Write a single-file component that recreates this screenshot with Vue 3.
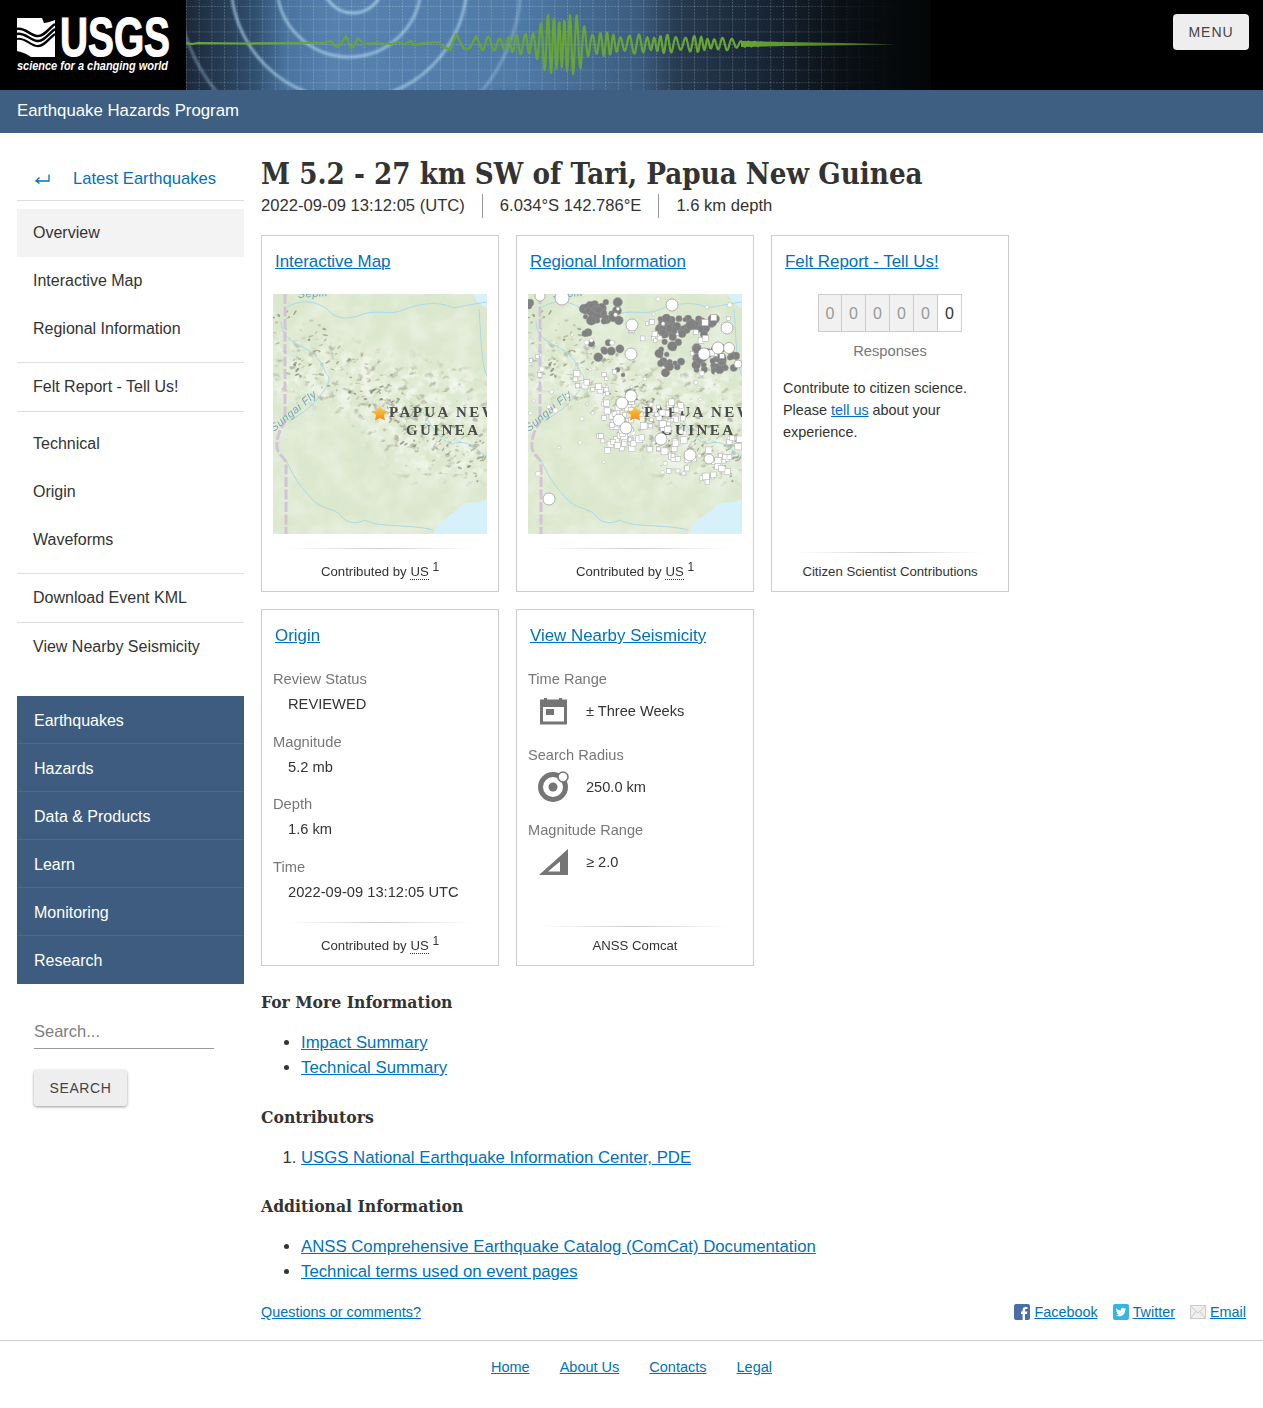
<script setup>
function rng(seed) {
  let s = seed
  return () => {
    s = (s * 1664525 + 1013904223) % 4294967296
    return s / 4294967296
  }
}

function lerpTable(table, x) {
  for (let i = 0; i < table.length - 1; i++) {
    const [x0, y0] = table[i]
    const [x1, y1] = table[i + 1]
    if (x >= x0 && x <= x1) return y0 + ((y1 - y0) * (x - x0)) / (x1 - x0)
  }
  return 0
}

// seismogram line: hand-placed start, then an irregular oscillation
function seismo() {
  const start = [[0,43],[6,44],[12,43],[60,43.5],[120,43],[138,43],[145,41],[150,47],[154,45],[160,36],[165,48],[168,46],[172,38],[178,44],[190,43],[205,44],[212,42],[218,44],[225,41],[228,45],[240,43],[252,42],[258,47],[264,50],[270,34],[278,49],[284,48],[290,36],[296,50]]
  const env = [[296,7],[330,9],[345,15],[362,30],[379,38],[392,28],[405,15],[420,12],[440,10],[500,9],[545,6],[570,2],[590,.6],[600,0]]
  const pts = start.map((p) => p.join(','))
  let phase = Math.PI / 2
  for (let x = 297; x <= 600; x += 0.75) {
    const base = x < 340 ? 10 : x < 405 ? 6.5 : 8
    const period = base * (1 + 0.22 * Math.sin(x * 0.13))
    phase += (2 * Math.PI * 0.75) / period
    const mod = 0.82 + 0.18 * Math.sin(x * 0.21 + 1.2)
    const y = 44 + lerpTable(env, x) * mod * Math.sin(phase)
    pts.push(x.toFixed(1) + ',' + y.toFixed(1))
  }
  return pts.join(' ')
}
const seismoPts = seismo()

function hills() {
  const r = rng(21)
  const out = []
  for (let i = 0; i < 190; i++) {
    const x = r() * 214
    const c = 42 + x * 0.5
    const y = c + (r() - 0.5) * (x < 60 ? 70 : 52) + (x > 120 ? 18 : 0)
    const rot = -60 + r() * 80
    out.push({ x, y, rx: 0.8 + r() * 2.2, ry: 0.5 + r() * 0.9, rot, o: 0.2 + r() * 0.45 })
  }
  return out
}
const hillList = hills()

const bigCircles = [[34,4,7],[144,11,6],[104,31,6],[199,34,6],[103,60,6],[176,60,6],[190,54,6],[201,54,5.5],[103,102,6],[94,109,6],[91,126,6],[98,134,6],[133,145,6],[162,161,6],[181,165,5],[21,205,6],[210,70,4],[12,2,5]]
function regional() {
  const r = rng(99)
  const gray = []
  const boxes = [[55,8,36,20,42],[131,24,57,17,56],[131,41,24,40,18],[168,54,40,24,38],[55,35,10,6,3],[60,45,35,25,7],[0,6,4,6,2],[85,74,20,12,2]]
  for (const [x, y, w, h, n] of boxes) {
    for (let i = 0; i < n; i++) gray.push({ x: x + r() * w, y: y + r() * h, s: 2 + r() * 2.8 })
  }
  const squares = []
  const sq = [[68,104,87,50,90],[41,74,44,30,14],[138,158,63,17,18],[100,22,45,24,8],[162,18,44,44,10],[0,60,10,22,3],[170,178,14,12,5],[150,135,60,20,6]]
  for (const [x, y, w, h, n] of sq) {
    for (let i = 0; i < n; i++) squares.push({ x: x + r() * w, y: y + r() * h, s: 3.5 + r() * 3.5 })
  }
  const small = []
  for (let i = 0; i < 60; i++) small.push({ x: r() * 214, y: r() * 180, s: 1 + r() * 1.6 })
  return { gray, squares, small }
}
const reg = regional()

const sideA = ['Overview', 'Interactive Map', 'Regional Information']
const sideC = ['Technical', 'Origin', 'Waveforms']
const blueNav = ['Earthquakes', 'Hazards', 'Data & Products', 'Learn', 'Monitoring', 'Research']
const mapCards = [
  { title: 'Interactive Map', overlay: false },
  { title: 'Regional Information', overlay: true }
]
const origin = [
  ['Review Status', 'REVIEWED'],
  ['Magnitude', '5.2 mb'],
  ['Depth', '1.6 km'],
  ['Time', '2022-09-09 13:12:05 UTC']
]
</script>

<template>
  <div class="page">
    <header class="top">
      <div class="logo">
        <svg width="186" height="90" viewBox="0 0 186 90">
          <rect x="17" y="18" width="38" height="39" fill="#fff" />
          <path d="M42 18 H55 V20 C50 22 46 23 44 23 Z" fill="#000" />
          <path d="M17 51 C22 52 27 54 31 57 H17 Z" fill="#000" />
          <g fill="none" stroke="#000">
            <path d="M17 29 C24 27 30 35 37 36 C44 37 49 28 55 24" stroke-width="2.6" />
            <path d="M17 34 C24 32 30 40 37 41 C44 42 49 33 55 29" stroke-width="2.4" />
            <path d="M17 39 C24 37 30 45 37 46 C44 47 49 38 55 34" stroke-width="2.2" />
          </g>
          <text x="60" y="56" class="logo-big" textLength="110" lengthAdjust="spacingAndGlyphs">USGS</text>
          <text x="17" y="70" class="logo-small" textLength="151" lengthAdjust="spacingAndGlyphs">science for a changing world</text>
        </svg>
      </div>
      <div class="banner">
        <svg width="745" height="90" viewBox="0 0 745 90">
          <defs>
            <linearGradient id="bg" x1="0" x2="1" y1="0" y2="0">
              <stop offset="0" stop-color="#1b2838" />
              <stop offset="0.09" stop-color="#2f4d6c" />
              <stop offset="0.135" stop-color="#4a74a0" />
              <stop offset="0.2" stop-color="#5782b0" />
              <stop offset="0.45" stop-color="#4f7aa6" />
              <stop offset="0.61" stop-color="#3a5b7d" />
              <stop offset="0.66" stop-color="#263a50" />
              <stop offset="0.77" stop-color="#182636" />
              <stop offset="0.88" stop-color="#0a1015" />
              <stop offset="1" stop-color="#030506" />
            </linearGradient>
            <pattern id="grid" width="12.7" height="12.7" patternUnits="userSpaceOnUse" y="6">
              <path d="M0 .5H12.7M.5 0V12.7" stroke="#fff" stroke-opacity=".25" stroke-dasharray="1.5 1.5" fill="none" />
            </pattern>
            <filter id="glow" x="-20%" y="-20%" width="140%" height="140%"><feGaussianBlur stdDeviation="1.3" /></filter>
            <linearGradient id="gridFade" x1="0" x2="1" y1="0" y2="0">
              <stop offset="0" stop-color="#fff" />
              <stop offset="0.82" stop-color="#fff" />
              <stop offset="0.9" stop-color="#333" />
              <stop offset="1" stop-color="#000" />
            </linearGradient>
            <mask id="gmask"><rect width="745" height="90" fill="url(#gridFade)" /></mask>
            <linearGradient id="tail" x1="0" x2="1" y1="0" y2="0">
              <stop offset="0" stop-color="#69a534" />
              <stop offset="0.7" stop-color="#4f7d2a" />
              <stop offset="1" stop-color="#2a4017" />
            </linearGradient>
          </defs>
          <rect width="745" height="90" fill="url(#bg)" />
          <g fill="none" stroke="#a9cfe8" filter="url(#glow)">
            <circle cx="167" cy="-17" r="30" stroke-width="3" stroke-opacity=".8" />
            <circle cx="163" cy="-15" r="72" stroke-width="3" stroke-opacity=".7" />
            <circle cx="163" cy="-18" r="118" stroke-width="3" stroke-opacity=".7" />
            <circle cx="163" cy="-18" r="172" stroke-width="3" stroke-opacity=".4" />
          </g>
          <rect width="745" height="90" fill="url(#grid)" mask="url(#gmask)" />
          <polyline :points="seismoPts" fill="none" stroke="#69a534" stroke-width="2.2" stroke-linejoin="round" />
          <path d="M555 41 L600 42 L680 43.5 L712 44.500 L680 45 L600 46 L555 47 Z" fill="url(#tail)" />
        </svg>
      </div>
      <button class="menu">MENU</button>
    </header>
    <div class="program">Earthquake Hazards Program</div>

    <div class="body-wrap">
      <aside class="side">
        <a class="latest">
          <span class="arrow">
            <svg width="15" height="10" viewBox="0 0 15 10"><path d="M14 0.500 V7 H1.500 M4.500 3.500 L1 7 L4.500 9.500" fill="none" stroke="#0071bc" stroke-width="1.300" /></svg>
          </span>
          <span>Latest Earthquakes</span>
        </a>
        <nav class="side-nav nine">
          <a v-for="(s, i) in sideA" :key="s" class="item" :class="{ on: i === 0 }">{{ s }}</a>
        </nav>
        <nav class="side-nav"><a class="item">Felt Report - Tell Us!</a></nav>
        <nav class="side-nav nine"><a v-for="s in sideC" :key="s" class="item">{{ s }}</a></nav>
        <nav class="side-nav"><a class="item">Download Event KML</a></nav>
        <nav class="side-nav last"><a class="item">View Nearby Seismicity</a></nav>
        <nav class="blue">
          <a v-for="b in blueNav" :key="b" class="blue-item">{{ b }}</a>
        </nav>
        <div class="search">
          <div class="search-input">Search...</div>
          <button class="search-btn">SEARCH</button>
        </div>
      </aside>

      <main class="main">
        <h1 class="title">M 5.2 - 27 km SW of Tari, Papua New Guinea</h1>
        <div class="meta">
          <span>2022-09-09 13:12:05 (UTC)</span>
          <span>6.034°S 142.786°E</span>
          <span>1.6 km depth</span>
        </div>

        <div class="cards">
          <section v-for="c in mapCards" :key="c.title" class="card">
            <a class="card-title">{{ c.title }}</a>
            <svg class="map" width="214" height="240" viewBox="0 0 214 240">
              <defs>
                <filter :id="'tex' + c.overlay" x="0" y="0" width="100%" height="100%">
                  <feTurbulence type="fractalNoise" baseFrequency=".04" numOctaves="3" seed="4" />
                  <feColorMatrix values="0 0 0 0 1  0 0 0 0 1  0 0 0 0 1  0 0 0 1.8 -.7" />
                </filter>
                <filter :id="'hn' + c.overlay" x="0" y="0" width="100%" height="100%">
                  <feTurbulence type="fractalNoise" baseFrequency=".11 .14" numOctaves="3" seed="11" />
                  <feColorMatrix values="0 0 0 0 .42  0 0 0 0 .43  0 0 0 0 .33  0 0 0 5 -3" />
                  <feGaussianBlur stdDeviation=".4" />
                </filter>
                <filter :id="'wn' + c.overlay" x="0" y="0" width="100%" height="100%">
                  <feTurbulence type="fractalNoise" baseFrequency=".09" numOctaves="3" seed="31" />
                  <feColorMatrix values="0 0 0 0 1  0 0 0 0 1  0 0 0 0 1  0 0 0 4 -1.7" />
                </filter>
                <filter :id="'bf' + c.overlay"><feGaussianBlur stdDeviation="7" /></filter>
                <mask :id="'band' + c.overlay">
                  <polygon points="0,45 70,50 214,80 214,185 130,185 80,125 0,95" fill="#fff" :filter="`url(#bf${c.overlay})`" />
                </mask>
                <filter :id="'blur' + c.overlay"><feGaussianBlur stdDeviation=".5" /></filter>
                <linearGradient :id="'star' + c.overlay" x1="0" x2="0" y1="0" y2="1">
                  <stop offset="0" stop-color="#ffd04a" />
                  <stop offset="1" stop-color="#f58a0b" />
                </linearGradient>
              </defs>
              <rect width="214" height="240" fill="#dce8ce" />
              <rect width="214" height="240" :filter="`url(#tex${c.overlay})`" opacity=".4" />
              <g :mask="`url(#band${c.overlay})`">
                <rect width="214" height="240" :filter="`url(#wn${c.overlay})`" opacity=".45" />
                <rect width="214" height="240" :filter="`url(#hn${c.overlay})`" opacity=".85" />
              </g>
              <path d="M160 240 C168 225 176 222 185 215 C192 205 200 212 214 205 V240 Z" fill="#d7f1fb" />
              <path d="M200 0 C203 8 208 12 214 14 V0 Z" fill="#d7f1fb" />
              <g :filter="`url(#blur${c.overlay})`">
                <ellipse v-for="(h, i) in hillList" :key="i" :cx="h.x" :cy="h.y" :rx="h.rx" :ry="h.ry" :transform="`rotate(${h.rot} ${h.x} ${h.y})`" fill="#6e7358" :opacity="h.o" />
              </g>
              <g fill="none" stroke="#a9d9e6" stroke-width="1">
                <path d="M14 13 C30 4 45 8 55 16 C62 24 72 26 85 22 C100 14 118 22 130 16 C145 10 165 6 180 14 C190 12 200 10 214 8" />
                <path d="M8 27 C8 40 16 46 28 52 C40 58 50 68 52 78 C60 84 54 92 50 98 C40 114 26 120 16 128" />
                <path d="M14 168 C22 186 30 196 42 208 C52 216 62 214 68 222 C74 230 84 230 92 226 C104 234 140 230 160 236" />
                <path d="M150 118 C158 132 166 145 178 150 C190 146 200 150 206 158 L214 162" />
                <path d="M206 15 C208 40 208 70 214 82" />
              </g>
              <path d="M12 0 V128 C8 134 3 142 4 154 C6 162 12 164 13 168 V240" fill="none" stroke="#d2c4d8" stroke-width="3" stroke-dasharray="10 2.500" />
              <text x="25" y="4" class="river" transform="rotate(-4 25 4)">Sepik</text>
              <text x="1" y="138" class="river" transform="rotate(-40 1 138)">Sungai Fly</text>
              <text x="116" y="123" class="place">PAPUA NEW</text>
              <text x="133" y="141" class="place">GUINEA</text>
              <g v-if="c.overlay">
                <circle v-for="(g, i) in reg.gray" :key="'g' + i" :cx="g.x" :cy="g.y" :r="g.s" fill="#808080" stroke="#999" stroke-width=".4" />
                <circle v-for="(g, i) in reg.small" :key="'s' + i" :cx="g.x" :cy="g.y" :r="g.s" fill="#fff" stroke="#aaa" stroke-width=".4" />
                <rect v-for="(g, i) in reg.squares" :key="'q' + i" :x="g.x" :y="g.y" :width="g.s" :height="g.s" fill="#fff" stroke="#aaa" stroke-width=".5" />
                <circle v-for="(g, i) in bigCircles" :key="'b' + i" :cx="g[0]" :cy="g[1]" :r="g[2]" fill="#fff" stroke="#888" stroke-width=".6" />
              </g>
              <path d="M107 111.500 L109.400 116.600 L115 117.300 L110.900 121.100 L112 126.600 L107 123.900 L102 126.600 L103.100 121.100 L99 117.300 L104.600 116.600 Z" :fill="`url(#star${c.overlay})`" />
            </svg>
            <footer class="card-foot">Contributed by <abbr>US</abbr> <sup>1</sup></footer>
          </section>

          <section class="card">
            <a class="card-title">Felt Report - Tell Us!</a>
            <div class="counter">
              <span v-for="n in 5" :key="n" class="digit">0</span><span class="digit now">0</span>
            </div>
            <div class="responses">Responses</div>
            <p class="cta">Contribute to citizen science. Please <a>tell us</a> about your experience.</p>
            <footer class="card-foot felt">Citizen Scientist Contributions</footer>
          </section>

          <section class="card">
            <a class="card-title">Origin</a>
            <dl class="origin">
              <template v-for="o in origin" :key="o[0]">
                <dt>{{ o[0] }}</dt>
                <dd>{{ o[1] }}</dd>
              </template>
            </dl>
            <footer class="card-foot">Contributed by <abbr>US</abbr> <sup>1</sup></footer>
          </section>

          <section class="card">
            <a class="card-title">View Nearby Seismicity</a>
            <div class="near">
              <div class="near-label">Time Range</div>
              <div class="near-row">
                <svg width="40" height="30" viewBox="0 0 40 30">
                  <path d="M4 3.500 H8 V2 H11 V3.500 H23 V2 H26 V3.500 H31 V28.500 H4 Z M7 11 V25.500 H28 V11 Z" fill="#757575" fill-rule="evenodd" />
                  <rect x="10" y="13" width="8" height="6" fill="#757575" />
                </svg>
                <span>± Three Weeks</span>
              </div>
              <div class="near-label b">Search Radius</div>
              <div class="near-row">
                <svg width="40" height="32" viewBox="0 0 40 32">
                  <circle cx="17" cy="16" r="12.500" fill="none" stroke="#757575" stroke-width="5" />
                  <circle cx="17" cy="16" r="4.500" fill="#757575" />
                  <circle cx="27" cy="6" r="5" fill="#fff" stroke="#757575" stroke-width="1.600" />
                </svg>
                <span>250.0 km</span>
              </div>
              <div class="near-label c">Magnitude Range</div>
              <div class="near-row">
                <svg width="40" height="28" viewBox="0 0 40 28">
                  <path d="M3 27 L32 1 V27 Z M12 23.500 H24 V13.500 Z" fill="#757575" fill-rule="evenodd" />
                </svg>
                <span>≥ 2.0</span>
              </div>
            </div>
            <footer class="card-foot felt2">ANSS Comcat</footer>
          </section>
        </div>

        <h2 class="h2 h2a">For More Information</h2>
        <ul class="list">
          <li><a>Impact Summary</a></li>
          <li><a>Technical Summary</a></li>
        </ul>
        <h2 class="h2">Contributors</h2>
        <ol class="list">
          <li><a>USGS National Earthquake Information Center, PDE</a></li>
        </ol>
        <h2 class="h2 h2a">Additional Information</h2>
        <ul class="list">
          <li><a>ANSS Comprehensive Earthquake Catalog (ComCat) Documentation</a></li>
          <li><a>Technical terms used on event pages</a></li>
        </ul>

        <div class="social-row">
          <a class="q">Questions or comments?</a>
          <div class="social">
            <span class="soc">
              <svg width="16" height="16" viewBox="0 0 16 16"><rect width="16" height="16" rx="2" fill="#4a6ea9" /><path d="M11 16V10h2l.3-2.400H11V6.200c0-.7.2-1.100 1.200-1.100h1.200V3c-.6-.1-1.200-.1-1.800-.1-1.800 0-3 1.100-3 3v1.700H7V10h1.600v6Z" fill="#fff" /></svg>
              <a>Facebook</a>
            </span>
            <span class="soc">
              <svg width="16" height="16" viewBox="0 0 16 16"><rect width="16" height="16" rx="2" fill="#35b5e5" /><path d="M13 5c-.4.2-.8.3-1.200.3.4-.3.8-.7.9-1.200-.4.2-.9.4-1.300.5a2.100 2.100 0 0 0-3.600 1.900C6 6.400 4.500 5.600 3.500 4.300c-.6 1-.3 2.200.6 2.800-.3 0-.6-.1-.9-.3 0 1 .7 1.900 1.700 2.100-.3.1-.6.1-1 0 .3.900 1.100 1.500 2 1.500-.9.700-2 1-3.100.9 1 .6 2.100 1 3.300 1 4 0 6.300-3.400 6.100-6.400.4-.3.8-.6 1.100-1Z" fill="#fff" /></svg>
              <a>Twitter</a>
            </span>
            <span class="soc">
              <svg width="16" height="16" viewBox="0 0 16 16"><rect x=".5" y="1.500" width="15" height="13" fill="#efefef" stroke="#ccc" /><path d="M1 2.500 8 9l7-6.500M1 14l5-6.500M15 14l-5-6.500" fill="none" stroke="#ccc" /></svg>
              <a>Email</a>
            </span>
          </div>
        </div>
      </main>
    </div>

    <footer class="foot">
      <a>Home</a><a>About Us</a><a>Contacts</a><a>Legal</a>
    </footer>
  </div>
</template>

<style>
html, body { margin: 0; background: #fff; }
</style>

<style scoped>
.page { font-family: "Liberation Sans", Arial, sans-serif; font-size: 16px; color: #333; min-height: 1408px; }
a { color: #0071bc; }

.top { height: 90px; background: #000; display: flex; position: relative; }
.logo { width: 186px; height: 90px; }
.logo svg, .banner svg { display: block; }
.logo-big { font: 700 56px "Liberation Sans", sans-serif; fill: #fff; stroke: #fff; stroke-width: 1.2px; }
.logo-small { font: italic 700 12px "Liberation Sans", sans-serif; fill: #fff; }
.banner { width: 745px; height: 90px; }
.menu { position: absolute; right: 14px; top: 14px; width: 76px; height: 36px; border: 0; border-radius: 4px; background: #eee; color: #444; font: 14px "Liberation Sans", sans-serif; letter-spacing: 1px; padding: 0; }

.program { height: 43px; background: #3e5f82; color: #fff; font-size: 16.8px; line-height: 41px; padding-left: 17px; }

.body-wrap { display: flex; padding: 0 17px; gap: 17px; }
.side { width: 227px; flex: none; padding-top: 22px; }
.latest { display: flex; align-items: center; height: 46px; border-bottom: 1px solid #ddd; box-sizing: border-box; font-size: 16.6px; padding: 2px 0 0 18px; }
.arrow { width: 38px; display: flex; }
.side-nav { border-bottom: 1px solid #ddd; padding: 8px 0; display: flex; flex-direction: column; }
.side-nav.nine { padding-bottom: 9px; }
.side-nav.last { border-bottom: 0; }
.item { height: 48px; line-height: 48px; padding-left: 16px; color: #333; }
.side-nav .item:only-child { height: 32px; line-height: 32px; }
.item.on { background: #f3f3f3; }
.blue { margin-top: 25px; display: flex; flex-direction: column; }
.blue-item { height: 48px; line-height: 50px; box-sizing: border-box; background: #3d5c7f; color: #fff; padding-left: 17px; border-bottom: 1px solid #4a6a8d; }
.blue-item:last-child { border-bottom: 0; }
.search { padding: 32px 30px 0 17px; }
.search-input { height: 33px; line-height: 31px; box-sizing: border-box; border-bottom: 1px solid #999; color: #808080; font-size: 16.5px; }
.search-btn { display: block; margin-top: 21px; width: 93px; height: 36px; border: 0; border-radius: 3px; background: #eee; color: #444; font: 14px "Liberation Sans", sans-serif; letter-spacing: .6px; box-shadow: 0 1px 3px rgba(0, 0, 0, .4); padding: 0; }

.main { flex: 1; min-width: 0; padding-top: 22px; }
.title { margin: 0; font: 700 29.2px/38px "DejaVu Serif Condensed", "DejaVu Serif", serif; color: #333; }
.meta { display: flex; height: 24px; line-height: 24px; margin-top: 1px; font-size: 16.6px; }
.meta span { padding-right: 17px; margin-right: 17px; border-right: 1px solid #999; }
.meta span:last-child { border: 0; }

.cards { display: grid; grid-template-columns: repeat(3, 238px); grid-auto-rows: 357px; gap: 17px; margin-top: 17px; }
.card { position: relative; border: 1px solid #ccc; box-sizing: border-box; padding: 0 11px; }
.card-title { display: block; margin: 16px 0 0 2px; font-size: 16.9px; line-height: 20px; text-decoration: underline; }
.map { display: block; margin-top: 22px; }
.river { font: italic 11px "Liberation Sans", sans-serif; fill: #7aa7b5; letter-spacing: .5px; }
.place { font: 700 15px "Liberation Serif", serif; fill: #4a4a4a; letter-spacing: 2.4px; }
.card-foot { position: absolute; left: 0; right: 0; bottom: 0; height: 43px; line-height: 47px; text-align: center; font-size: 13.2px; color: #333; }
.card-foot::before { content: ""; position: absolute; top: 0; left: 25px; right: 25px; height: 1px; background: linear-gradient(to right, transparent, #ccc, transparent); }
.card-foot.felt, .card-foot.felt2 { height: 39px; line-height: 39px; }
abbr { border-bottom: 1px dotted #333; }
sup { font-size: 12px; line-height: 0; }
.counter { display: flex; justify-content: center; margin-top: 22px; }
.digit { width: 24px; height: 38px; line-height: 37px; text-align: center; box-sizing: border-box; border: 1px solid #ccc; border-left-width: 0; background: #f1f1f1; color: #999; }
.digit:first-child { border-left-width: 1px; }
.digit.now { background: #fff; color: #333; }
.responses { text-align: center; color: #777; font-size: 14.7px; margin-top: 9px; line-height: 20px; }
.cta { margin: 16px 0 0; font-size: 14.4px; line-height: 22px; }
.cta a { text-decoration: underline; }

.origin { margin: 23px 0 0; font-size: 14.7px; }
.origin dt { color: #777; line-height: 20px; }
.origin dd { margin: 5px 0 17.67px 15px; line-height: 20px; }

.near { margin-top: 23px; font-size: 14.6px; }
.near-label { color: #777; line-height: 20px; }
.near-label.b { margin-top: 12px; }
.near-label.c { margin-top: 11px; }
.near-row { display: flex; align-items: center; height: 44px; padding-left: 8px; gap: 10px; font-size: 14.6px; }
.near-row span { line-height: 20px; }

.h2 { margin: 25px 0 0; font: 700 17.4px/24px "DejaVu Serif Condensed", "DejaVu Serif", serif; color: #333; }
.h2a { margin-top: 24px; }
.list { margin: 16px 0 0; padding-left: 40px; font-size: 16.75px; line-height: 25px; }
.list a, .q, .soc a, .foot a { text-decoration: underline; }

.social-row { display: flex; justify-content: space-between; align-items: center; margin-top: 16px; height: 24px; font-size: 14.4px; }
.social { display: flex; gap: 15px; }
.soc { display: flex; align-items: center; gap: 4px; }

.foot { margin-top: 16px; border-top: 1px solid #ccc; display: flex; justify-content: center; gap: 30px; padding-top: 18px; font-size: 14.5px; }
</style>
